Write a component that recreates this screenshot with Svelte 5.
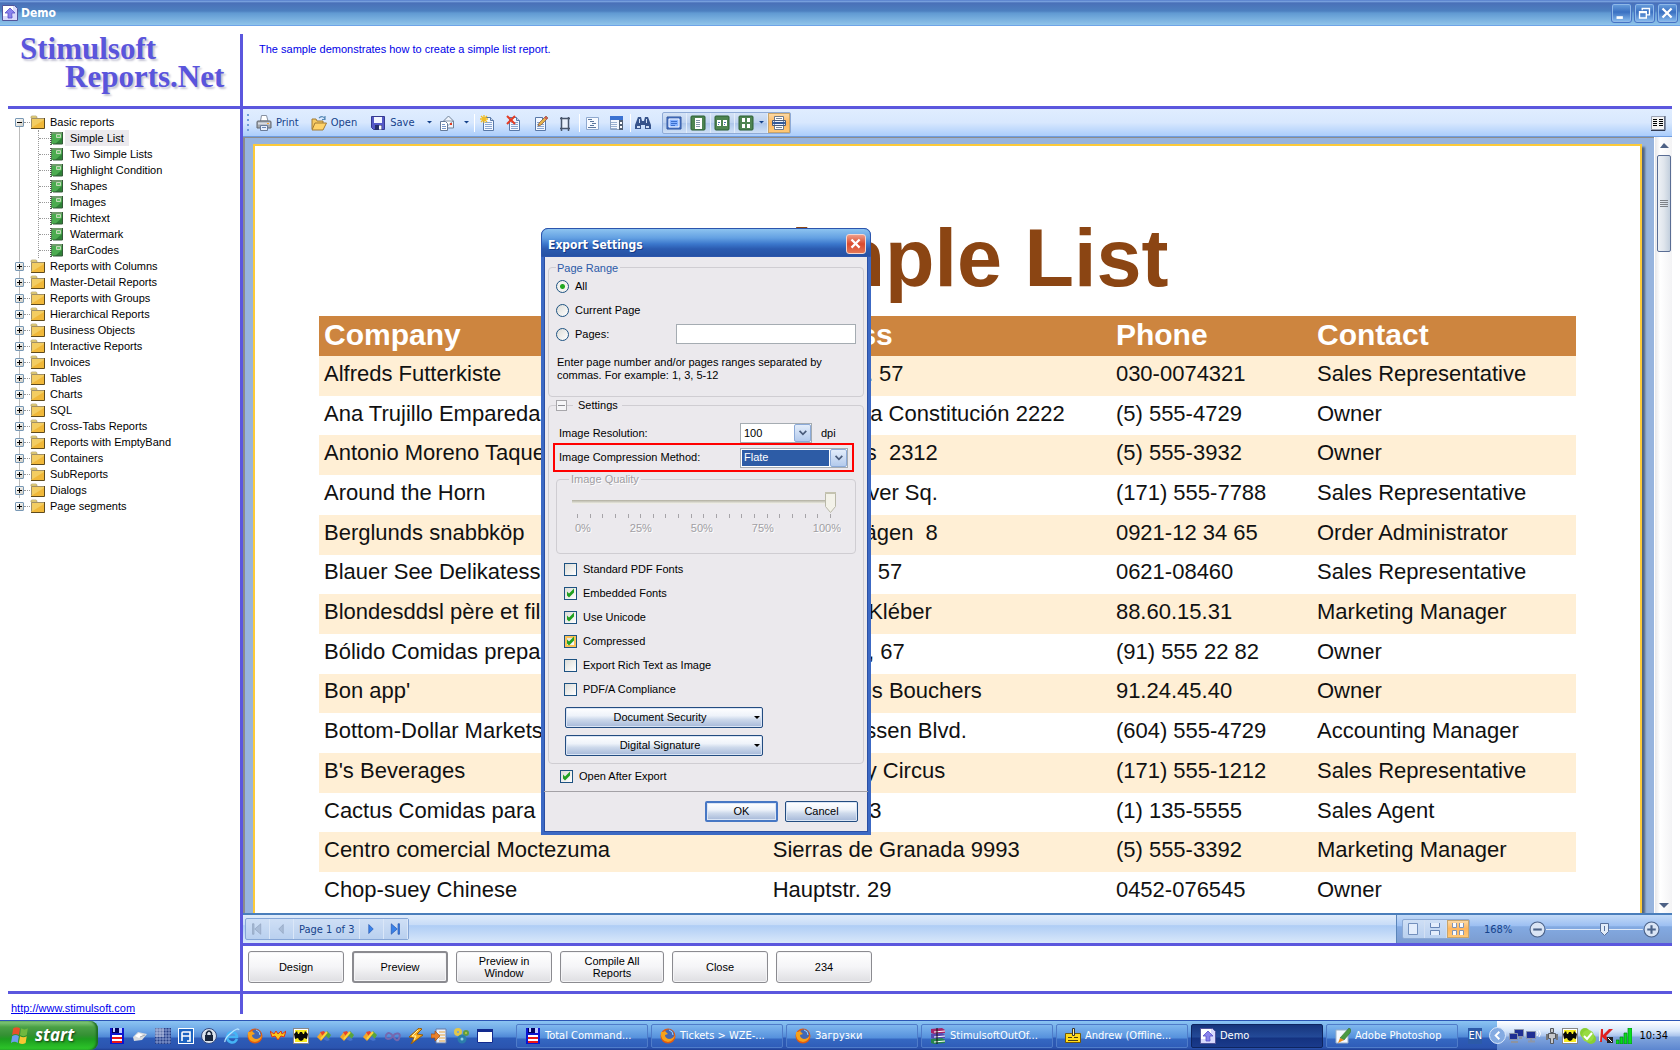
<script>
    const folders = [
        'Reports with Columns', 'Master-Detail Reports', 'Reports with Groups', 'Hierarchical Reports',
        'Business Objects', 'Interactive Reports', 'Invoices', 'Tables', 'Charts', 'SQL',
        'Cross-Tabs Reports', 'Reports with EmptyBand', 'Containers', 'SubReports', 'Dialogs', 'Page segments',
    ];
    const basicReports = [
        'Simple List', 'Two Simple Lists', 'Highlight Condition', 'Shapes',
        'Images', 'Richtext', 'Watermark', 'BarCodes',
    ];

    const customers = [
        ['Alfreds Futterkiste', 'Obere Str. 57', '030-0074321', 'Sales Representative'],
        ['Ana Trujillo Emparedados y helados', 'Avda. de la Constitución 2222', '(5) 555-4729', 'Owner'],
        ['Antonio Moreno Taquería', 'Mataderos  2312', '(5) 555-3932', 'Owner'],
        ['Around the Horn', '120 Hanover Sq.', '(171) 555-7788', 'Sales Representative'],
        ['Berglunds snabbköp', 'Berguvsvägen  8', '0921-12 34 65', 'Order Administrator'],
        ['Blauer See Delikatessen', 'Forsterstr. 57', '0621-08460', 'Sales Representative'],
        ['Blondesddsl père et fils', '24, place Kléber', '88.60.15.31', 'Marketing Manager'],
        ['Bólido Comidas preparadas', 'C/ Araquil, 67', '(91) 555 22 82', 'Owner'],
        ["Bon app'", '12, rue des Bouchers', '91.24.45.40', 'Owner'],
        ['Bottom-Dollar Markets', '23 Tsawassen Blvd.', '(604) 555-4729', 'Accounting Manager'],
        ["B's Beverages", 'Fauntleroy Circus', '(171) 555-1212', 'Sales Representative'],
        ['Cactus Comidas para llevar', 'Cerrito 333', '(1) 135-5555', 'Sales Agent'],
        ['Centro comercial Moctezuma', 'Sierras de Granada 9993', '(5) 555-3392', 'Marketing Manager'],
        ['Chop-suey Chinese', 'Hauptstr. 29', '0452-076545', 'Owner'],
    ];

    const options = [
        { label: 'Standard PDF Fonts', checked: false },
        { label: 'Embedded Fonts', checked: true },
        { label: 'Use Unicode', checked: true },
        { label: 'Compressed', checked: true, hot: true },
        { label: 'Export Rich Text as Image', checked: false },
        { label: 'PDF/A Compliance', checked: false },
    ];

    const actions = ['Design', 'Preview', 'Preview in Window', 'Compile All Reports', 'Close', '234'];

    const quickLaunch = [
        ['disk', 'Total Commander'], ['cloud', 'Cloud'], ['grid', 'Grid'], ['blueapp', 'Designer'],
        ['lock', 'Password safe'], ['ie', 'Internet Explorer'], ['firefox', 'Firefox'], ['crown', 'Fire'],
        ['bat', 'The Bat'], ['vs', 'Visual Studio 2003'], ['vs', 'Visual Studio 2005'], ['vs', 'Visual Studio 2008'],
        ['loop', 'Visual Studio 2010'], ['bolt', 'Winamp'], ['export', 'Import'], ['gears', 'Services'], ['window', 'Desktop'],
    ];
    const tasks = [
        ['disk', 'Total Command...'], ['firefox', 'Tickets > WZE-...'], ['firefox', 'Загрузки'],
        ['books', 'StimulsoftOutOf...'], ['badge', 'Andrew (Offline...'], ['demo', 'Demo'], ['brush', 'Adobe Photoshop'],
    ];
    const tray = ['network', 'sound', 'robot', 'bat', 'skype', 'kasper', 'signal'];

    const sheet = '<path d="M3.5 2.5h7l3 3v10h-10z" fill="#f4f8ff" stroke="#5878a8"/><path d="M10.5 2.5v3h3" fill="#c5d5ec" stroke="#5878a8"/><path d="M5 7.5h7M5 9.5h7M5 11.5h7M5 13.5h7" stroke="#8aa6d0"/>';

    // inner markup of every 16x16 icon
    const icons = {
        folder: '<path d="M1 3q0-1 1-1h4q1 0 1 2H1z" fill="#f3dc7a" stroke="#a89868" stroke-width=".7"/><path d="M1 4h13v10H1z" fill="#f3cd62"/><path d="M1 14L14 6v8z" fill="#efb02d" opacity=".75"/><path d="M1.5 13.500V4.500H14" fill="none" stroke="#a09069"/><path d="M14.500 4v10.500H1" fill="none" stroke="#5e4a1d"/>',
        book: '<path d="M2 2h12v12H2z" fill="#4cab50"/><path d="M2 2h12v2H2z" fill="#719c6d"/><path d="M14 7v7H6z" fill="#2f8238"/><path d="M7.5 4.5h4v3h-4z" fill="#65c368" stroke="#c2dab7"/><path d="M13.500 2v12H4" stroke="#345938" fill="none"/><path d="M2 2v13" stroke="#555" stroke-dasharray="1 1" stroke-width="2"/>',
        demo: '<path d="M.5.5h12l3 3v12H.5z" fill="#d9dafc" stroke="#52559b"/><path d="M1 1h10v10H1z" fill="#fff"/><path d="M3 8l5-5 5 5h-3v5H6V8z" fill="#8a83ed" stroke="#5750c6" stroke-width=".8"/>',
        print: '<path d="M4.5 6l1-5.500h5L12 6z" fill="#fff" stroke="#8790a0"/><path d="M1 7q0-1 1-1h12q1 0 1 1v6H1z" fill="#a3a8af" stroke="#61656d"/><path d="M2 8.500h12" stroke="#d9dce4" stroke-width="2"/><path d="M11 8.500h2" stroke="#ffa62b"/><path d="M4.5 10.500h7v5h-7z" fill="#e7eefb" stroke="#6a7b98"/><path d="M6 12.500h4" stroke="#6c87b7"/>',
        open: '<path d="M1 14V4h4l1 2h6v3" fill="#f5ca64" stroke="#a17a34"/><path d="M4 8h11.500L12 15H1z" fill="#ffd36a" stroke="#a17a34"/><path d="M8 3q4-3 6 1m0-3v3.500h-3" fill="none" stroke="#5588b5" stroke-width="1.200"/>',
        save: '<path d="M1.500 1.500h13v13h-11l-2-2z" fill="#5559c7" stroke="#35398f"/><path d="M4 2h8v6H4z" fill="#f3f6ff"/><path d="M5 10h7v5H5z" fill="#27306d"/><path d="M9 10.500h2.500v4H9z" fill="#fff"/>',
        mail: '<path d="M4.500 6l5-5 5 5v7h-10z" fill="#edf2fb" stroke="#718399"/><path d="M5 6h9l-4.500 4z" fill="#fff" stroke="#8c9cae"/><path d="M1.500 6.500h5l2 2v7h-7z" fill="#fff" stroke="#657a99"/><path d="M3 9.500h3M3 11.500h4M3 13.500h4" stroke="#7898c9"/><path d="M11 8h2v2h-2z" fill="#df3d22"/>',
        newPage: sheet + '<path d="M4 0v8M0 4h8M1 1l6 6M7 1L1 7" stroke="#f2bd24" stroke-width="1.300"/>',
        delPage: sheet + '<path d="M1 1l8 8M9 1L1 9" stroke="#e43c25" stroke-width="2"/>',
        editPage: sheet + '<path d="M14 1l2 2-7 7-3 1 1-3z" fill="#e5b34d" stroke="#81553c" stroke-width=".7"/><path d="M13 2l2 2" stroke="#cf5757" stroke-width="2"/>',
        sizePage: '<path d="M4 3h8v11H4z" fill="#e9f0fa"/><path d="M4.500 2v14M11.500 2v14M3 3.500h10M3 13.500h10" stroke="#48566b" stroke-width="1.500"/>',
        bookmarks: '<path d="M2.500 2.500h12v12h-12z" fill="#f7faff" stroke="#8fa9cf"/><path d="M4 4.500h4M6 6.500h4M8 8.500h4M6 10.500h4M4 12.500h8" stroke="#5b779e"/>',
        thumbs: '<path d="M2.500 1.500h12v13h-12z" fill="#f5f8fd" stroke="#8ba0be"/><path d="M2 1h13v4H2z" fill="#3b72d2"/><path d="M3 7.500h6M3 9.500h6M3 11.500h6M3 13.500h6" stroke="#9ab0cf"/><path d="M11 5h4v10h-4z" fill="#526175"/><path d="M12 7h2v2h-2zM12 11h2v2h-2z" fill="#fff"/>',
        find: '<path d="M3 2h3l1 4h2l1-4h3l3 8v4h-6v-4H6v4H0v-4z" fill="#37548c"/><path d="M2 11h3v2H2zM11 11h3v2h-3zM4 4h1v4H4zM11 4h1v4h-1z" fill="#cfdef5"/>',
        full: '<path d="M1 2h14v12H1z" fill="#4f79c9" stroke="#2d529b"/><path d="M3 4h10v8H3z" fill="#85b1ff" stroke="#fff"/><path d="M5 6.500h6M5 8.500h6M5 10.500h4" stroke="#3c70ce"/>',
        page1: '<rect x="1" y="1" width="14" height="14" rx="1" fill="#4e8450" stroke="#2a5f34"/><path d="M5 3h7v11H5z" fill="#fff"/><path d="M6 5.500h4M6 7.500h4M6 9.500h4M6 11.500h4" stroke="#8196a8"/>',
        page2: '<rect x="1" y="1" width="14" height="14" rx="1" fill="#4e8450" stroke="#2a5f34"/><path d="M3 5h4v6H3zM9 5h4v6H9z" fill="#fff"/><path d="M4 7.500h2M4 9.500h1M10 7.500h2M10 9.500h1" stroke="#4e73a9"/>',
        page4: '<rect x="1" y="1" width="14" height="14" rx="1" fill="#4e8450" stroke="#2a5f34"/><path d="M4 3h3v4H4zM9 3h3v4H9zM4 9h3v4H4zM9 9h3v4H9z" fill="#fff"/>',
        pageWidth: '<path d="M3.500 1.500h9v13h-9z" fill="#fff" stroke="#6e7888"/><path d="M5 3.500h6M5 12.500h6" stroke="#778496"/><path d="M1.500 5.500h13v5h-13z" fill="#eef2fb" stroke="#4a5a78"/><path d="M1 8l3-2v1h8V6l3 2-3 2V9H4v1z" fill="#335897"/>',
        first: '<path d="M2 1h2v14H2zM13 1v14L5 8z" fill="#a9bcd7" stroke="#8b9dbb" stroke-width=".8"/>',
        prev: '<path d="M11 2v12L5 8z" fill="#a9bcd7" stroke="#8b9dbb" stroke-width=".8"/>',
        next: '<path d="M5 2v12l6-6z" fill="#3982e9" stroke="#1d4ba8" stroke-width=".8"/>',
        last: '<path d="M12 1h2v14h-2zM3 1v14l8-7z" fill="#3982e9" stroke="#1d4ba8" stroke-width=".8"/>',
        single: '<path d="M3.500 2.500h9v11h-9z" fill="#e3edfc" stroke="#7390bd"/>',
        continuous: '<path d="M3.500 2v4.500h9V2M3.500 14V9.500h9V14" fill="#e3edfc" stroke="#6684b5"/>',
        multiple: '<path d="M2.500 2v4.500h4V2M9.500 2v4.500h4V2M2.500 14V9.500h4V14M9.500 14V9.500h4V14" fill="#f9fbff" stroke="#8294b3"/>',
        windows: '<path d="M2 2q3-2 6 0L7 8q-3-2-6 0z" fill="#e8502a"/><path d="M9 2q3 2 6 0l-1 6q-3 2-6 0z" fill="#70b83f"/><path d="M1 9q3-2 6 0l-1 6q-3-2-6 0z" fill="#6c9df0"/><path d="M8 9q3 2 6 0l-1 6q-3 2-6 0z" fill="#f7c632"/>',
        disk: '<path d="M1 0h14v16H1z" fill="#0b16d0"/><path d="M3 0h9v5H3z" fill="#000060"/><path d="M4 0h2v4H4zM10 0h3v5h-3z" fill="#bdc8ff"/><path d="M3 7h10v8H3z" fill="#fff"/><path d="M3 9h10v2H3zM3 13h10v2H3z" fill="#ea1717"/>',
        cloud: '<path d="M1 9l5-5 9 2-5 6-8 1z" fill="#d8dce0"/><path d="M3 8l4-3 4 2-4 3z" fill="#fff"/><path d="M8 9l5-2" stroke="#a3aab2"/>',
        grid: '<path d="M0 0h16v16H0z" fill="#253f88"/><path d="M2 0v16M5 0v16M8 0v16M11 0v16M14 0v16M0 2h16M0 5h16M0 8h16M0 11h16M0 14h16" stroke="#b9cbf5" stroke-width=".6"/><path d="M0 0h9v9H0z" fill="#fff" opacity=".3"/>',
        blueapp: '<path d="M0 0h16v16H0z" fill="#fff"/><path d="M1 1h14v14H1z" fill="#1d63c0"/><path d="M4 13V5q0-1 1-1h7v9H9m-5-5h8" fill="none" stroke="#fff" stroke-width="1.600"/>',
        lock: '<circle cx="8" cy="8" r="7.500" fill="#dce3ed" stroke="#344b80"/><path d="M4 7h8v6H4z" fill="#18243a"/><path d="M5.500 7V5q2.500-4 5 0v2" fill="none" stroke="#18243a" stroke-width="1.500"/>',
        ie: '<path d="M13 11q-2 4-5.500 3.500Q3 13 3 9q1-5 5-5 5 1 5 5H4" fill="none" stroke="#45b4f5" stroke-width="2.600"/><path d="M1 14Q0 11 7 5t8-3" fill="none" stroke="#b7e3ff" stroke-width="1.300"/>',
        firefox: '<circle cx="8" cy="8" r="7.500" fill="#df5b13"/><circle cx="9" cy="6.500" r="5" fill="#4267b5"/><path d="M1 4Q0 13 8 14q6-1 7-7-2 4-6 4-4-1-4-4l3-1-3-3-2 1z" fill="#f6a21c"/><path d="M9 2q4 1 4 5" stroke="#9cd5ff" fill="none"/>',
        crown: '<path d="M0 3l4 3 2-3 2 3 3-3 1 3 4-3-2 6-3-1-3 4-3-4-3 1z" fill="#f8c81c" stroke="#dc3419"/>',
        bat: '<path d="M0 0h16v16H0z" fill="#fff"/><path d="M.5.5h15v15H.5z" fill="none" stroke="#111" stroke-dasharray="1 1"/><path d="M2 2h12v12H2z" fill="#f8ec20"/><path d="M1 6l3-3 1 3h1l1-2h2l1 2h1l1-3 3 3-1 5-3-1-1 2-2 1-2-1-1-2-3 1z" fill="#080808"/>',
        vs: '<path d="M1 9l4-5 4 4-4 5z" fill="#f4a528"/><path d="M4 4l4-1 3 5-3 2z" fill="#e5452d"/><path d="M8 8l3-5 4 4-3 5z" fill="#58a43c"/><path d="M7 11l3-3 4 4-3 1z" fill="#4472cd"/><path d="M5 11l6-7" stroke="#fbd33b" stroke-width="2"/>',
        loop: '<path d="M8 8Q4 3 1.500 6.500T3 11q3 0 5-3t5-2.500 1 5T8 8z" fill="none" stroke="#7567ae" stroke-width="2"/>',
        bolt: '<path d="M11 0L1 9l5 1-3 6 12-9-6-1 5-5z" fill="#f9ae1d" stroke="#925b11"/><path d="M10 2L4 8h4l-2 4" fill="none" stroke="#fff4b0"/>',
        export: '<path d="M5 1h10v14H5z" fill="#e9f0fc" stroke="#6a7da4"/><path d="M8 4h6M8 7h6M8 10h6M8 13h6" stroke="#e8a53a"/><path d="M0 6h4V3l5 5-5 5v-3H0z" fill="#e8802a" stroke="#a04c14" stroke-width=".7"/>',
        gears: '<circle cx="4" cy="4" r="2.500" fill="none" stroke="#e2c64c" stroke-width="3"/><circle cx="12" cy="5" r="2" fill="#c6cf3f" stroke="#5f9c44" stroke-width="2"/><circle cx="8" cy="11" r="3" fill="#8fd0e8" stroke="#2b7dab" stroke-width="3"/>',
        window: '<path d="M.5 1.500h15v13H.5z" fill="#fff" stroke="#122a8e"/><path d="M0 1h16v3H0z" fill="#122a8e"/>',
        books: '<path d="M1 1l11-1 3 2v3L4 6 1 5z" fill="#a52468"/><path d="M1 6l11-1 3 2v3L4 11 1 10z" fill="#574ab0"/><path d="M1 11l11-1 3 2v3L4 16l-3-1z" fill="#26864c"/><path d="M4 4l11-1M4 9l11-1M4 14l11-1" stroke="#fff"/><path d="M7 0v16" stroke="#111"/>',
        badge: '<path d="M.5 5.500h15v9H.5z" fill="#ffdb1c" stroke="#715808"/><path d="M7.500.5h2v7h-2z" fill="#fff3a1" stroke="#333"/><path d="M3 9.500h4M9 9.500h4M3 12.500h10" stroke="#493d14"/>',
        brush: '<path d="M1 2h12v13H1z" fill="#f4f8ff" stroke="#9ab0c9"/><path d="M14 0q3 1 1 5l-6 7-4-2z" fill="#4b9a42" stroke="#376e35" stroke-width=".6"/><path d="M5 10l4 2-6 3z" fill="#ed8b1b"/>',
        network: '<path d="M6.500 1.500h9v7h-9z" fill="#1f2f94" stroke="#8a94ad"/><path d="M1.500 5.500h8v6h-8z" fill="#1f2f94" stroke="#8a94ad"/><path d="M11 10h3M3 14h7" stroke="#8d93a0" stroke-width="2"/>',
        sound: '<path d="M.5 3.500h9v7h-9z" fill="#1f2f94" stroke="#8a94ad"/><path d="M2 13.500h7M5 10v3" stroke="#8d96a8" stroke-width="2"/><path d="M11 3q2 3 0 5M13 2q3 4 0 7" stroke="#fff" fill="none"/>',
        robot: '<path d="M6.500.5h3v4h-3zM4.500 5.500h7v5h-2v5h-3v-5h-2z" fill="#c6c8cc" stroke="#55585e"/><path d="M3 6v6M13 6v6" stroke="#75777b" stroke-width="2"/>',
        skype: '<circle cx="5" cy="5" r="5" fill="#88cf32"/><circle cx="11" cy="11" r="5" fill="#88cf32"/><circle cx="8" cy="8" r="6" fill="#98db42"/><path d="M4 8l3 3 5-6" fill="none" stroke="#fff" stroke-width="2"/>',
        kasper: '<path d="M1 2h3v11H1z" fill="#e9f0e9"/><path d="M3 1h2v6l6-6h4L8 8l6 6h-4L4 9v5H2z" fill="#df2222"/><path d="M9 9h6v6H9z" fill="#222"/><path d="M10 10l4 4" stroke="#fff"/>',
        signal: '<path d="M0 12h3v4H0zM4 9h3v7H4zM8 5h3v11H8zM12 0h4v16h-4z" fill="#08dc21" stroke="#078314" stroke-width=".7"/>',
        document: '<path d="M1.500 1.500h13v13h-13z" fill="#f4f4f4" stroke="#9aa2b4"/><path d="M15 1v14.500H1" fill="none" stroke="#303a52" stroke-width="1"/><path d="M3 4.500h4M3 6.500h4M3 8.500h4M3 10.500h4M9 4.500h4M9 6.500h4M9 8.500h4M9 10.500h4" stroke="#000"/>',
    };

    const ticks = Array.from({ length: 21 });
</script>

{#snippet icon(name)}
    <svg class="icon" viewBox="0 0 16 16" aria-hidden="true">{@html icons[name]}</svg>
{/snippet}

<div class="screen">
    <header class="titlebar">
        {@render icon('demo')}
        <span class="titlebar-text">Demo</span>
        <button class="win-btn" aria-label="Minimize"><svg viewBox="0 0 21 21"><path d="M5 15h7" stroke="#fff" stroke-width="3" /></svg></button>
        <button class="win-btn" aria-label="Restore"><svg viewBox="0 0 21 21"><path d="M8 7V5h8v7h-3M5 8.500h7.500v7H5zM5 9.500h7" fill="none" stroke="#fff" stroke-width="1.500" /></svg></button>
        <button class="win-btn" aria-label="Close window"><svg viewBox="0 0 21 21"><path d="M5 5l10 10M15 5L5 15" stroke="#fff" stroke-width="2.500" /></svg></button>
    </header>

    <div class="top-row">
        <div class="logo"><span>Stimulsoft</span><span class="logo-second">Reports.Net</span></div>
        <p class="description">The sample demonstrates how to create a simple list report.</p>
    </div>

    <main class="middle">
        <nav class="tree">
            <ul class="roots">
                <li>
                    <div class="node"><button class="toggle open" aria-label="Collapse"></button><i></i>{@render icon('folder')}<span>Basic reports</span></div>
                    <ul class="children">
                        {#each basicReports as report, i}
                            <li class="node"><i></i>{@render icon('book')}<span class:selected={i === 0}>{report}</span></li>
                        {/each}
                    </ul>
                </li>
                {#each folders as folder}
                    <li class="node"><button class="toggle" aria-label="Expand"></button><i></i>{@render icon('folder')}<span>{folder}</span></li>
                {/each}
            </ul>
        </nav>

        <section class="workspace">
            <div class="toolbar">
                <span class="grip"></span>
                <button class="tool print">{@render icon('print')}Print</button>
                <button class="tool open-file">{@render icon('open')}Open</button>
                <button class="tool save">{@render icon('save')}Save</button>
                <button class="drop" aria-label="Save options"></button>
                <button class="tool" aria-label="Send">{@render icon('mail')}</button>
                <button class="drop" aria-label="Send options"></button>
                <span class="sep"></span>
                <button class="tool wide" aria-label="New page">{@render icon('newPage')}</button>
                <button class="tool wide" aria-label="Delete page">{@render icon('delPage')}</button>
                <button class="tool wide" aria-label="Edit page">{@render icon('editPage')}</button>
                <button class="tool" aria-label="Page size">{@render icon('sizePage')}</button>
                <span class="sep"></span>
                <button class="tool" aria-label="Bookmarks">{@render icon('bookmarks')}</button>
                <button class="tool" aria-label="Thumbnails">{@render icon('thumbs')}</button>
                <span class="sep"></span>
                <button class="tool" aria-label="Find">{@render icon('find')}</button>
                <div class="view-group">
                    <button aria-label="Full screen">{@render icon('full')}</button>
                    <button aria-label="One page">{@render icon('page1')}</button>
                    <button aria-label="Two pages">{@render icon('page2')}</button>
                    <button class="with-caret" aria-label="Multiple pages">{@render icon('page4')}<span class="caret"></span></button>
                    <button class="active" aria-label="Page width">{@render icon('pageWidth')}</button>
                </div>
                <button class="tool last" aria-label="Close preview">{@render icon('document')}</button>
            </div>

            <div class="viewer">
                <div class="canvas">
                    <article class="page">
                        <h1>Simple List</h1>
                        <table>
                            <thead>
                                <tr><th class="company">Company</th><th class="address">Address</th><th class="phone">Phone</th><th>Contact</th></tr>
                            </thead>
                            <tbody>
                                {#each customers as row}
                                    <tr>{#each row as cell}<td>{cell}</td>{/each}</tr>
                                {/each}
                            </tbody>
                        </table>
                    </article>
                </div>
                <div class="scrollbar">
                    <button class="scroll-up" aria-label="Scroll up"></button>
                    <div class="scroll-thumb"><span></span></div>
                    <button class="scroll-down" aria-label="Scroll down"></button>
                </div>
            </div>

            <div class="status">
                <div class="pager">
                    <button aria-label="First page">{@render icon('first')}</button>
                    <button aria-label="Previous page">{@render icon('prev')}</button>
                    <span>Page 1 of 3</span>
                    <button aria-label="Next page">{@render icon('next')}</button>
                    <button aria-label="Last page">{@render icon('last')}</button>
                </div>
                <div class="zoom-area">
                    <div class="modes">
                        <button aria-label="Single page">{@render icon('single')}</button>
                        <button aria-label="Continuous">{@render icon('continuous')}</button>
                        <button class="active" aria-label="Multiple">{@render icon('multiple')}</button>
                    </div>
                    <span class="zoom-value">168%</span>
                    <button class="round" aria-label="Zoom out"><svg viewBox="0 0 16 16"><circle cx="8" cy="8" r="7" /><path d="M4 8h8" /></svg></button>
                    <input class="zoom-range" type="range" min="0" max="100" value="61" aria-label="Zoom" />
                    <button class="round" aria-label="Zoom in"><svg viewBox="0 0 16 16"><circle cx="8" cy="8" r="7" /><path d="M4 8h8M8 4v8" /></svg></button>
                </div>
            </div>

            <div class="actions">
                {#each actions as action, i}
                    <button class:focused={i === 1} class:broad={i === 3}><span>{action}</span></button>
                {/each}
            </div>
        </section>
    </main>

    <div class="bottom-row">
        <div class="site"><a href="http://www.stimulsoft.com">http://www.stimulsoft.com</a></div>
        <div class="bottom-line"></div>
    </div>

    <footer class="taskbar">
        <button class="start">{@render icon('windows')}<span>start</span></button>
        <div class="quick">
            {#each quickLaunch as [name, title]}
                <button aria-label={title}>{@render icon(name)}</button>
            {/each}
        </div>
        <div class="tasks">
            {#each tasks as [name, title]}
                <button class:current={title === 'Demo'}>{@render icon(name)}<span>{title}</span></button>
            {/each}
        </div>
        <span class="lang">EN</span>
        <div class="tray">
            <button class="tray-toggle" aria-label="Hide icons"><svg viewBox="0 0 16 16"><path d="M10 4L6 8l4 4" /></svg></button>
            {#each tray as name}{@render icon(name)}{/each}
            <time>10:34</time>
        </div>
    </footer>

    <div class="dialog" role="dialog" aria-labelledby="dialog-title">
        <div class="dialog-title">
            <h2 id="dialog-title">Export Settings</h2>
            <button class="dialog-close" aria-label="Close dialog"><svg viewBox="0 0 20 20"><path d="M5 5l9 9M14 5l-9 9" stroke="#fff" stroke-width="2.500" /></svg></button>
        </div>
        <form class="dialog-body">
            <fieldset class="range">
                <legend>Page Range</legend>
                <label class="radio"><input type="radio" name="range" checked />All</label>
                <label class="radio"><input type="radio" name="range" />Current Page</label>
                <div class="pages-row">
                    <label class="radio"><input type="radio" name="range" />Pages:</label>
                    <input class="pages" type="text" aria-label="Pages" />
                </div>
                <p>Enter page number and/or pages ranges separated by<br />commas. For example: 1, 3, 5-12</p>
            </fieldset>

            <fieldset class="settings">
                <legend><button type="button" class="collapse" aria-label="Collapse settings"></button><i></i>Settings</legend>
                <div class="field">
                    <label for="resolution">Image Resolution:</label>
                    <span class="combo short">
                        <select id="resolution"><option>100</option></select>
                        <svg viewBox="0 0 17 19"><path d="M5 7l4 4 4-4" /></svg>
                    </span>
                    <span>dpi</span>
                </div>
                <div class="field marked">
                    <label for="method">Image Compression Method:</label>
                    <span class="combo">
                        <select id="method" class="picked"><option>Flate</option></select>
                        <svg viewBox="0 0 17 19"><path d="M5 7l4 4 4-4" /></svg>
                    </span>
                </div>
                <fieldset class="quality" disabled>
                    <legend>Image Quality</legend>
                    <input type="range" min="0" max="100" value="100" aria-label="Image Quality" />
                    <div class="ticks">{#each ticks as _}<i></i>{/each}</div>
                    <div class="scale"><span>0%</span><span>25%</span><span>50%</span><span>75%</span><span>100%</span></div>
                </fieldset>
                {#each options as option}
                    <label class="check">
                        <input type="checkbox" class:hot={option.hot} checked={option.checked} />{option.label}
                    </label>
                {/each}
                <button type="button" class="push menu first-menu"><span>Document Security</span></button>
                <button type="button" class="push menu"><span>Digital Signature</span></button>
            </fieldset>
            <label class="check after"><input type="checkbox" checked />Open After Export</label>
            <div class="dialog-buttons">
                <button type="button" class="push default">OK</button>
                <button type="button" class="push">Cancel</button>
            </div>
        </form>
    </div>
</div>

<style>
    :global(body) {
        margin: 0;
        background: #fff;
    }

    .screen {
        --line: #5b57de;
        position: relative;
        display: flex;
        flex-direction: column;
        height: 100vh;
        overflow: hidden;
        font: 11px/13px "Liberation Sans", Arial, sans-serif;
        color: #000;
    }

    .screen *, .screen *::before, .screen *::after { box-sizing: border-box; }

    button {
        font: inherit;
        color: inherit;
        padding: 0;
        border: 0;
        background: none;
    }

    ul {
        list-style: none;
        margin: 0;
        padding: 0;
    }

    .icon {
        width: 16px;
        height: 16px;
        flex: none;
        display: block;
    }

    /* TITLE BAR */
    .titlebar {
        display: flex;
        align-items: center;
        gap: 2px;
        height: 26px;
        flex: none;
        padding: 1px 2px 0;
        border-bottom: 1px solid #6ea4e8;
        background: linear-gradient(#3a62ba 0, #85aee8 1px, #4a70b8 3px, #4d80c0 11px, #6099d2 13px, #8fc4ea 100%);
    }

    .titlebar-text {
        flex: 1;
        padding-left: 1px;
        font: bold 12px/16px "DejaVu Sans Condensed", "Open Sans", sans-serif;
        color: #fff;
    }

    .win-btn {
        width: 21px;
        height: 20px;
        border: 1px solid #4573c5;
        border-radius: 3px;
        background: linear-gradient(#6aa0dc, #3a70c2 45%, #8abdee);
        box-shadow: inset 0 0 0 1px #8fb8e8;
    }

    .win-btn svg { display: block; width: 19px; }

    /* HEADER */
    .top-row {
        display: flex;
        height: 83px;
        flex: none;
        margin: 0 8px;
        border-bottom: 3px solid var(--line);
    }

    .logo {
        display: flex;
        flex-direction: column;
        width: 232px;
        flex: none;
        padding: 9px 0 0 12px;
        font: bold 31px/28px "Liberation Serif", "Times New Roman", serif;
        color: #5a55dc;
        text-shadow: 2px 2px 2px #c4c4d4;
    }

    .logo-second { padding-left: 45px; }

    .description {
        flex: 1;
        margin: 8px 0 0;
        padding: 9px 16px;
        border-left: 3px solid var(--line);
        color: #0000e8;
    }

    .middle {
        display: flex;
        flex: 1;
        min-height: 0;
        margin: 0 8px;
        border-bottom: 3px solid var(--line);
    }

    /* TREE */
    .tree {
        width: 232px;
        flex: none;
        padding: 5px 0 0 7px;
    }

    .node {
        display: flex;
        align-items: center;
        height: 16px;
        white-space: nowrap;
    }

    .node i {
        width: 6px;
        border-top: 1px dotted #999;
    }

    .node span { padding: 2px 4px 1px; }

    .toggle {
        width: 9px;
        height: 9px;
        border: 1px solid #7898b5;
        border-radius: 1px;
        background:
            linear-gradient(#000, #000) center / 5px 1px no-repeat,
            linear-gradient(#000, #000) center / 1px 5px no-repeat,
            linear-gradient(135deg, #fff, #d2cec4);
    }

    .toggle.open {
        background:
            linear-gradient(#000, #000) center / 5px 1px no-repeat,
            linear-gradient(135deg, #fff, #d2cec4);
    }

    .roots { background: linear-gradient(90deg, transparent 4px, #bbb 4px, #bbb 5px, transparent 5px) 0 8px / 100% 376px no-repeat; }

    .children {
        margin-left: 23px;
        border-left: 1px dotted #999;
    }

    .children .node i { width: 10px; }
    .children .node span { padding: 2px 5px 1px; }
    .node .selected { background: #ebe9ed; }

    /* WORKSPACE */
    .workspace {
        display: flex;
        flex-direction: column;
        flex: 1;
        min-width: 0;
        border-left: 3px solid var(--line);
    }

    .toolbar {
        display: flex;
        align-items: center;
        height: 28px;
        flex: none;
        padding: 0 6px 0 3px;
        border-bottom: 1px solid #6f9de0;
        background: linear-gradient(#e0edff, #d8e8fe 50%, #abcdfb);
        font: 11px/13px "DejaVu Sans Condensed", "Noto Sans", sans-serif;
        color: #15428b;
    }

    .grip {
        width: 2px;
        height: 18px;
        margin: 0 7px 0 1px;
        background: repeating-linear-gradient(#6f9dd9 0 2px, transparent 2px 5px);
    }

    .tool {
        display: flex;
        align-items: center;
        gap: 4px;
        padding: 0 4px;
    }

    .print { padding: 0 8px 0 0; }
    .open-file { padding: 0 9px 0 4px; }
    .save { padding: 0 8px 0 4px; }
    .wide { padding: 0 5px; }
    .last { margin-left: auto; padding: 0; }

    .drop, .caret {
        width: 13px;
        height: 4px;
        background: #15428b;
        clip-path: polygon(4px 0, 10px 0, 7px 3px);
    }

    .sep {
        width: 1px;
        height: 18px;
        margin: 0 0 0 2px;
        background: #fff;
    }

    .view-group {
        display: flex;
        height: 22px;
        margin-left: 7px;
        border: 1px solid #8eaad6;
        border-radius: 2px;
        background: linear-gradient(#d5e3f6, #bed2ef 48%, #adc6ea 50%, #cfe0f6);
    }

    .view-group button {
        display: flex;
        align-items: center;
        padding: 0 4px 0 3px;
        border-right: 1px solid #e3edfa;
    }

    .view-group .with-caret { padding-right: 0; }

    .view-group .active, .modes .active {
        border: 1px solid #c9a56b;
        background: linear-gradient(#fcd9a4, #ffb65c 48%, #ffc877);
    }

    .view-group .active { padding: 0 2px; }

    .viewer {
        display: flex;
        flex: 1;
        min-height: 0;
        border-bottom: 2px solid #4a7ebb;
    }

    .canvas {
        flex: 1;
        min-width: 0;
        overflow: hidden;
        padding: 6px 12px 0 8px;
        border: solid #8c8c8c;
        border-width: 1px 0 0 2px;
        background: #97b4de;
    }

    .page {
        min-height: 900px;
        padding: 67px 64px 0;
        border: 2px solid #fcca3a;
        background: #fff;
        box-shadow: 3px 3px 2px #53647f;
        font-family: "Liberation Sans", Arial, sans-serif;
        color: #111;
    }

    h1 {
        margin: 0 0 13px;
        padding-left: 10px;
        font-size: 81px;
        line-height: 90px;
        text-align: center;
        color: #8b4513;
    }

    table {
        width: 100%;
        height: 596px;
        table-layout: fixed;
        border-collapse: collapse;
    }

    th {
        height: 40px;
        padding: 0 5px 2px;
        font-size: 30px;
        line-height: 32px;
        text-align: left;
        color: #fff;
        background: #cd853f;
    }

    .company { width: 35.7%; }
    .address { width: 27.3%; }
    .phone { width: 16%; }

    td {
        padding: 0 5px 4px;
        font-size: 22px;
        line-height: 26px;
        white-space: pre;
    }

    tbody tr:nth-child(odd) { background: #ffefd5; }

    .scrollbar {
        display: flex;
        flex-direction: column;
        width: 18px;
        flex: none;
        padding: 0 1px 0 2px;
        border-left: 1px solid #fff;
        background: linear-gradient(90deg, #e6e6e9, #fff 30%, #f3f3f5);
    }

    .scroll-up, .scroll-down {
        height: 18px;
        background: #4d6185;
        clip-path: polygon(3px 11px, 12px 11px, 7px 6px);
    }

    .scroll-down {
        margin-top: auto;
        clip-path: polygon(2px 8px, 12px 8px, 7px 13px);
    }

    .scroll-thumb {
        display: flex;
        align-items: center;
        height: 97px;
        padding: 0 2px;
        border: 1px solid #5a6d94;
        border-radius: 2px;
        background: linear-gradient(90deg, #eef1f6, #dfe5ec 50%, #c3cfdd);
    }

    .scroll-thumb span {
        flex: 1;
        height: 7px;
        background: repeating-linear-gradient(#7d8187 0 1px, transparent 1px 2px);
    }

    /* STATUS */
    .status {
        display: flex;
        justify-content: space-between;
        height: 28px;
        flex: none;
        background: linear-gradient(#e0ecfb, #c8dcf7 35%, #afcdf5 38%, #d9e8fa);
        font: 11px/13px "DejaVu Sans Condensed", "Noto Sans", sans-serif;
        color: #15428b;
    }

    .pager, .modes {
        display: flex;
        align-items: stretch;
        height: 22px;
        margin: 3px 0 0 2px;
        border: 1px solid #86a6d6;
        border-radius: 2px;
        background: linear-gradient(#cfdff5, #b9d0ef);
    }

    .pager button {
        padding: 0 4px 0 3px;
        border-right: 1px solid #dbe7f8;
    }

    .pager span {
        padding: 4px 5px;
        border-right: 1px solid #dbe7f8;
    }

    .pager .icon { height: 12px; }

    .zoom-area {
        display: flex;
        align-items: center;
        width: 276px;
        padding: 0 12px 0 5px;
        border-left: 1px solid #5a84ba;
        background: linear-gradient(#c3daf7, #9dc0f2 38%, #83aae2 42%, #7b9cd0);
    }

    .modes {
        height: 20px;
        margin: 0;
        border-color: #8ba9d4;
    }

    .modes button { padding: 0 3px 0 2px; border-right: 1px solid #d3e0f3; }
    .modes .active { padding: 0 2px; }
    .zoom-value { padding: 0 17px 0 14px; }

    .round svg {
        display: block;
        width: 17px;
        height: 17px;
        fill: #dae5f5;
        stroke: #4b6288;
    }

    .round path { stroke-width: 2; }

    .zoom-range {
        appearance: none;
        flex: 1;
        min-width: 0;
        height: 16px;
        margin: 0;
        background: linear-gradient(#dfe9f7, #dfe9f7) center / 100% 1px no-repeat;
    }

    .zoom-range::-webkit-slider-thumb {
        appearance: none;
        width: 9px;
        height: 13px;
        background: url("data:image/svg+xml,%3Csvg xmlns='http://www.w3.org/2000/svg' viewBox='0 0 9 13'%3E%3Cpath d='M.5.5h8v8l-4 4-4-4z' fill='%23e2ecf9' stroke='%2357709c'/%3E%3Cpath d='M4.500 3v5' stroke='%2357709c'/%3E%3C/svg%3E") no-repeat;
    }

    .actions {
        display: flex;
        align-items: center;
        gap: 8px;
        height: 48px;
        flex: none;
        padding: 0 5px 3px;
        border-top: 3px solid var(--line);
        line-height: 12px;
    }

    .actions button {
        display: flex;
        align-items: center;
        justify-content: center;
        width: 96px;
        height: 32px;
        border: 1px solid #8b8b90;
        border-radius: 3px;
        background: linear-gradient(#fff, #f5f5f7 50%, #dedee2);
        box-shadow: inset 0 0 0 1px #f4f4f6;
    }

    .actions .broad { width: 104px; }
    .actions span { width: 62px; }
    .actions .focused { border-width: 2px; }

    .bottom-row {
        display: flex;
        height: 26px;
        flex: none;
        margin: 0 8px;
    }

    .site {
        width: 232px;
        padding: 8px 3px;
    }

    a { color: #0000ee; }

    .bottom-line {
        height: 20px;
        border-left: 3px solid var(--line);
    }

    /* TASKBAR */
    .taskbar {
        display: flex;
        align-items: center;
        height: 30px;
        flex: none;
        border-top: 1px solid #2c55b5;
        background: linear-gradient(#8bc4f2, #6ba5e5 10px, #4f88d6 16px, #2d5cb8 17px, #2b54af 27px, #1f3f92);
        font: 11px/14px "DejaVu Sans Condensed", "Noto Sans", sans-serif;
        color: #fff;
    }

    .start {
        display: flex;
        align-items: center;
        gap: 6px;
        width: 98px;
        height: 29px;
        padding: 0 0 2px 11px;
        border-radius: 0 8px 8px 0;
        background: linear-gradient(#8dcf83, #4aa046 6px, #359034 14px, #1d9c1f 18px, #2fca2b);
        box-shadow: inset -2px 0 2px #1d6c23;
        font: italic bold 17px/24px "Open Sans", sans-serif;
        text-shadow: 1px 1px 2px #153d17;
    }

    .start .icon { width: 18px; height: 18px; }

    .quick {
        display: flex;
        gap: 7px;
        width: 407px;
        margin-left: 11px;
    }

    .tasks {
        display: flex;
        flex: 1;
        gap: 3px;
        min-width: 0;
    }

    .tasks button {
        display: flex;
        align-items: center;
        gap: 4px;
        width: 132px;
        height: 24px;
        padding-left: 8px;
        border: 1px solid #4f7cc9;
        border-radius: 2px;
        background: linear-gradient(#7fb7ee, #5590dc 13px, #3568c2 14px, #2f5db9);
        text-align: left;
        white-space: nowrap;
    }

    .tasks .current {
        border-color: #0e2560;
        background: linear-gradient(#17357c, #234a98 12px, #143280 13px, #1a3b8c);
    }

    .lang {
        width: 14px;
        padding: 1px 0;
        background: #2c5aa8;
    }

    .tray {
        display: flex;
        align-items: center;
        gap: 2px;
        height: 29px;
        margin-left: 15px;
        padding-right: 12px;
        background: linear-gradient(#fff, #d5e5fa 10px, #aac4ec 15px, #82a6de 16px, #5c86cf);
        color: #000;
    }

    .tray-toggle {
        width: 17px;
        height: 17px;
        margin-left: -8px;
        border: 1px solid #dbe9fc;
        border-radius: 50%;
        background: #84abe2;
    }

    .tray-toggle svg { display: block; fill: none; stroke: #fff; stroke-width: 2; }
    .tray time { margin-left: 5px; }

    /* DIALOG */
    .dialog {
        position: absolute;
        left: 541px;
        top: 228px;
        width: 330px;
        border: 3px solid #3c69c4;
        border-top: 0;
        border-radius: 7px 7px 0 0;
        background: #ebe9ed;
        box-shadow: inset 0 0 0 1px #2a4fa4;
    }

    .dialog-title {
        display: flex;
        align-items: center;
        justify-content: space-between;
        height: 29px;
        margin: 0 -3px;
        padding: 2px 4px 0 6px;
        border: 1px solid #2c55ad;
        border-radius: 7px 7px 0 0;
        background: linear-gradient(#8cc3f0, #63a0e2 9px, #3b77cc 15px, #2b5bb0 20px, #2651a4);
    }

    h2 {
        margin: 0;
        padding-top: 2px;
        font: bold 12px/16px "DejaVu Sans Condensed", "Open Sans", sans-serif;
        color: #fff;
        text-shadow: 1px 1px 0 #163a86;
    }

    .dialog-close {
        width: 20px;
        height: 20px;
        border: 1px solid #f5d6cf;
        border-radius: 3px;
        background: linear-gradient(#ef9c88, #da4a2e 50%, #e47655);
    }

    .dialog-close svg { display: block; }

    .dialog-body { padding: 4px 4px 0; }

    fieldset {
        min-width: 0;
        margin: 0;
        padding: 0 7px;
        border: 1px solid #cfcdd2;
        border-radius: 4px;
    }

    legend {
        display: flex;
        align-items: center;
        height: 13px;
        padding: 0 2px;
    }

    .range { padding-bottom: 14px; }
    .range legend { padding: 1px 2px 0 1px; color: #2c5aa8; }

    .radio, .check {
        display: flex;
        align-items: center;
        gap: 6px;
        height: 24px;
    }

    input[type="radio"], input[type="checkbox"] {
        appearance: none;
        width: 13px;
        height: 13px;
        margin: 0;
        border: 1px solid #1d5281;
        background: linear-gradient(135deg, #dcdcd7, #fff);
    }

    input[type="radio"] { border-radius: 50%; }

    input[type="radio"]:checked {
        background: radial-gradient(circle, #22a822 2px, #f2f2ef 3px);
    }

    input[type="checkbox"]:checked::before {
        content: "";
        display: block;
        width: 11px;
        height: 11px;
        background: #21a121;
        clip-path: polygon(2px 4px, 4px 6px, 9px 1px, 9px 5px, 4px 10px, 2px 8px);
    }

    input.hot { box-shadow: inset 0 0 0 2px #f9c256; }

    .pages-row {
        display: flex;
        align-items: center;
        justify-content: space-between;
    }

    .pages {
        width: 180px;
        height: 20px;
        border: 1px solid #a5acb2;
        background: #fff;
    }

    .range p { margin: 10px 1px 0; }

    .settings {
        margin-top: 2px;
        padding: 0 7px 7px;
    }

    .settings > legend { padding: 0 4px 0 0; }

    .settings legend i {
        width: 6px;
        margin-right: 5px;
        border-top: 1px solid #cfcdd2;
    }

    .collapse {
        width: 11px;
        height: 11px;
        border: 1px solid #a8a7ab;
        background: linear-gradient(#8b8b90, #8b8b90) center / 7px 1px no-repeat #f6f6f8;
    }

    .field {
        display: flex;
        align-items: center;
        height: 20px;
        margin-top: 11px;
        padding-left: 3px;
    }

    .field label { width: 181px; }

    .field.marked {
        height: 29px;
        margin: 0 2px 0 -3px;
        padding-left: 4px;
        border: 2px solid #ff0000;
    }

    .combo {
        display: flex;
        width: 108px;
        height: 20px;
        border: 1px solid #a5acb2;
        background: #fff;
    }

    .combo.short { width: 72px; margin-right: 9px; }

    .combo select {
        appearance: none;
        flex: 1;
        min-width: 0;
        margin: 1px;
        padding: 0 2px;
        border: 0;
        background: #fff;
        font: inherit;
    }

    .combo .picked { background: #2d5ca6; color: #fff; }

    .combo svg {
        width: 17px;
        height: 18px;
        border: 1px solid #8caad8;
        border-radius: 2px;
        background: linear-gradient(#e3edfb, #b3caec);
        fill: none;
        stroke: #495b7a;
        stroke-width: 2;
    }

    .quality {
        height: 81px;
        margin-top: 1px;
        padding: 0 19px 0 15px;
        color: #a09ea3;
        text-shadow: 1px 1px 0 #fff;
    }

    .quality legend { margin-left: -3px; }

    .quality input {
        appearance: none;
        display: block;
        width: 100%;
        height: 22px;
        margin: 5px 0 1px;
        background: linear-gradient(#b0ae9f, #f6f5ef) center / 100% 4px no-repeat;
    }

    .quality input::-webkit-slider-thumb {
        appearance: none;
        width: 11px;
        height: 21px;
        background: url("data:image/svg+xml,%3Csvg xmlns='http://www.w3.org/2000/svg' viewBox='0 0 11 21'%3E%3Cpath d='M.5.5h10v14l-5 6-5-6z' fill='%23f3f2e9' stroke='%23b9b8a8'/%3E%3Cpath d='M0 1h11' stroke='%23c4c3b0' stroke-width='2'/%3E%3C/svg%3E") no-repeat;
    }

    .ticks {
        display: flex;
        justify-content: space-between;
        padding: 0 5px;
    }

    .ticks i {
        width: 1px;
        height: 4px;
        background: #a6a4a8;
    }

    .scale {
        display: flex;
        justify-content: space-between;
        margin: 4px -5px 0 3px;
    }

    .settings .check { padding-left: 8px; }
    .quality + .check { margin-top: 3px; }

    .push {
        height: 21px;
        width: 73px;
        border: 1px solid #234c80;
        border-radius: 2px;
        background: linear-gradient(#fff, #eef3fa 40%, #cdd9eb 60%, #a5b8d8);
        box-shadow: inset 0 0 0 1px #dae5f5;
    }

    .push.default { border: 2px solid #4777c4; }

    .push.menu {
        display: flex;
        align-items: center;
        width: 198px;
        margin: 7px 0 0 9px;
    }

    .push.first-menu { margin-top: 6px; }
    .menu span { flex: 1; }

    .menu::after {
        content: "";
        width: 8px;
        height: 3px;
        background: #000;
        clip-path: polygon(0 0, 6px 0, 3px 3px);
    }

    .after { padding-left: 12px; }

    .dialog-buttons {
        display: flex;
        justify-content: flex-end;
        gap: 7px;
        margin: 3px -4px 0;
        padding: 9px 10px 10px;
        border-top: 1px solid #a3a1a6;
    }
</style>
